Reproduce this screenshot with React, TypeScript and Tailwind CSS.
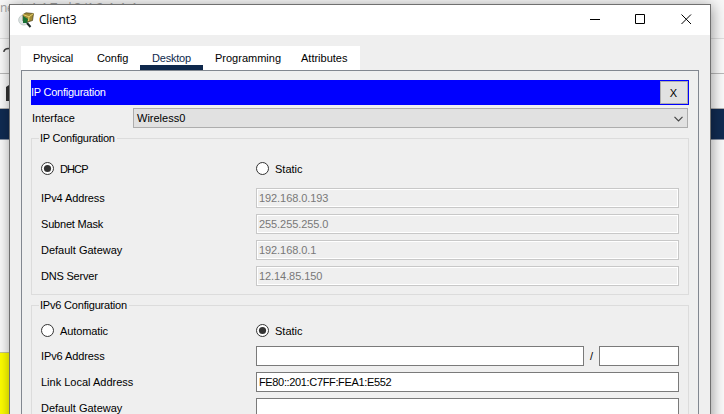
import type { ReactNode } from "react";

function Radio({ label, checked, className }: { label: string; checked?: boolean; className: string }) {
  return (
    <label className={`flex h-[13px] items-center ${className}`}>
      <svg width="13" height="13" viewBox="0 0 13 13" className="mr-[6px] shrink-0">
        <circle cx="6.5" cy="6.5" r="6" fill="#fff" stroke="#333" />
        {checked && <circle cx="6.5" cy="6.5" r="3.6" fill="#333" />}
      </svg>
      <span className="relative top-px">{label}</span>
    </label>
  );
}

function Group({ title, titleClass, className, children }: { title: string; titleClass: string; className: string; children: ReactNode }) {
  return (
    <section className={`relative w-[658px] border border-[#dcdcdc] ${className}`}>
      <h2 className={`absolute -top-[8px] left-[7px] bg-[#efefef] pl-[1px] leading-[14px] ${titleClass}`}>{title}</h2>
      {children}
    </section>
  );
}

function Row({ label, labelClass, children }: { label: string; labelClass: string; children: ReactNode }) {
  return (
    <div className="flex h-5 items-center pl-[9px]">
      <span className="w-[215px] shrink-0 leading-5">
        <span className={labelClass}>{label}</span>
      </span>
      {children}
    </div>
  );
}

function Disabled({ value }: { value: string }) {
  return (
    <div className="h-5 w-[423px] border border-[#c8c8c8] p-px">
      <div className="h-4 bg-[#efefef] pl-[1px] leading-[17px] tracking-[-0.08px] text-[#787878] outline outline-white">{value}</div>
    </div>
  );
}

function Field({ value, className }: { value?: string; className: string }) {
  return (
    <div className={`h-5 border border-[#7a7a7a] bg-white pl-[2px] leading-[19px] tracking-[-0.35px] ${className}`}>{value}</div>
  );
}

function Backdrop() {
  return (
    <div className="flex h-[414px] flex-col bg-[#fafafa]">
      <div className="h-[39px] border-b border-[#dedede] bg-[#f7f7f7]">
        <div className="whitespace-nowrap font-['Open_Sans',sans-serif] text-[12px] leading-[15px] tracking-[-0.3px] text-[#a0a0a0]">
          nent_4_1 Task3 (1.2_1_1_1
        </div>
      </div>
      <div className="h-[35px] border-b border-[#b9b9b9]" />
      <div className="h-[35px] border-b border-[#b0b0b0]" />
      <div className="h-[31px] border-b border-[#8791a3] bg-[#102b52]" />
      <div className="h-[212px]" />
      <div className="w-10 flex-1 border-t border-[#c6c692] bg-[#ffff00]" />
    </div>
  );
}

export default function App() {
  return (
    <main className="relative h-[414px] w-[724px] overflow-hidden font-['Liberation_Sans',Arial,sans-serif] text-[11px] text-black">
      <Backdrop />
      <svg className="absolute left-0 top-[44px]" width="12" height="62" viewBox="0 0 12 62" fill="none">
        <path d="M4 8V7C5 5 7 4 11 5" stroke="#444" strokeWidth="1.5" />
        <path d="M6 43L9 41H12V57H6Z" fill="#333" />
      </svg>
      <div className="absolute left-[9px] top-[4px] h-[430px] w-[702px] border border-[#707070] bg-[#efefef] shadow-[1px_2px_13px_0_rgba(0,0,0,0.4)]">
        <header className="flex h-[30px] items-center bg-white">
          <svg className="ml-[8px]" width="17" height="17" viewBox="0 0 17 17">
            <circle cx="5.7" cy="8" r="5" fill="#dce4e3" stroke="#c4cccb" />
            <path d="M5 2.5L8 .8L15.5 1.5L14.5 8.5L8 10.5L5 9Z" fill="#a08a35" stroke="#493d17" strokeWidth=".7" />
            <path d="M5 2.5L11 4.8L15.5 1.5M11 4.8L10.5 9" stroke="#e8d16d" fill="none" />
            <path d="M5 4L10 7L9 11H5Z" fill="#197134" />
            <path d="M9 11L12.5 15" stroke="#1c2928" strokeWidth="2" />
          </svg>
          <h1 className="ml-[4px] font-['Open_Sans',sans-serif] text-[12px] tracking-[-0.2px]">Client3</h1>
          <svg className="ml-auto mr-[18px] mt-[-2px]" width="102" height="11" viewBox="0 0 102 11" fill="none" stroke="#000">
            <path d="M0 5.5H10M45.5.5H54.5V9.5H45.5ZM91.5.5L101 10M101 .5L91.5 10" />
          </svg>
        </header>
        <nav className="ml-[11px] mt-[11px] flex h-6 w-[339px] items-center bg-white">
          <span className="w-[64px] pl-[12px] tracking-[-0.1px]">Physical</span>
          <span className="w-[55px] pl-[12px] tracking-[-0.1px]">Config</span>
          <span className="flex h-6 w-[63px] items-center border-b-[5px] border-[#0e284c] pl-[12px] pt-[5px] tracking-[-0.2px] text-[#0e284c]">Desktop</span>
          <span className="w-[86px] pl-[12px]">Programming</span>
          <span className="pl-[12px]">Attributes</span>
        </nav>
        <div className="ml-[11px] h-[370px] w-[678px] border border-[#828790] px-[9px] pt-[9px]">
          <div className="flex h-[25px] w-[658px] items-center justify-between bg-[#0000ff] pr-px text-white">
            <span className="tracking-[-0.25px]">IP Configuration</span>
            <button className="h-[23px] w-[28px] border border-[#adadad] bg-[#e1e1e1] pr-px pt-px text-black">X</button>
          </div>
          <div className="mt-[3px] flex h-5 items-center">
            <span className="w-[102px] pl-px">Interface</span>
            <div className="flex h-5 w-[555px] items-center justify-between border border-[#adadad] bg-[#e1e1e1] pl-[3px] pr-[4px]">
              <span>Wireless0</span>
              <svg className="mt-px" width="9" height="6" viewBox="0 0 9 6" fill="none" stroke="#444" strokeWidth="1.2"><path d="M.5 .8L4.5 4.8L8.5 .8" /></svg>
            </div>
          </div>
          <Group title="IP Configuration" titleClass="w-[78px] tracking-[-0.25px]" className="mt-[10px] h-[157px]">
            <div className="mt-[23px] flex pl-[9px]">
              <Radio label="DHCP" checked className="w-[215px] tracking-[-0.9px]" />
              <Radio label="Static" className="" />
            </div>
            <div className="mt-[13px] flex flex-col gap-[6px]">
              <Row label="IPv4 Address" labelClass="tracking-[-0.1px]"><Disabled value="192.168.0.193" /></Row>
              <Row label="Subnet Mask" labelClass="tracking-[-0.2px]"><Disabled value="255.255.255.0" /></Row>
              <Row label="Default Gateway" labelClass=""><Disabled value="192.168.0.1" /></Row>
              <Row label="DNS Server" labelClass="tracking-[-0.2px]"><Disabled value="12.14.85.150" /></Row>
            </div>
          </Group>
          <Group title="IPv6 Configuration" titleClass="w-[90px] tracking-[-0.2px]" className="mt-[10px] h-[157px]">
            <div className="mt-[18px] flex pl-[9px]">
              <Radio label="Automatic" className="w-[215px] tracking-[-0.1px]" />
              <Radio label="Static" checked className="" />
            </div>
            <div className="mt-[9px] flex flex-col gap-[6px]">
              <Row label="IPv6 Address" labelClass="tracking-[-0.1px]">
                <Field className="w-[328px]" />
                <span className="w-[15px] pt-px text-center">/</span>
                <Field className="w-[80px]" />
              </Row>
              <Row label="Link Local Address" labelClass=""><Field className="w-[423px]" value="FE80::201:C7FF:FEA1:E552" /></Row>
              <Row label="Default Gateway" labelClass=""><Field className="w-[423px]" /></Row>
            </div>
          </Group>
        </div>
      </div>
    </main>
  );
}
